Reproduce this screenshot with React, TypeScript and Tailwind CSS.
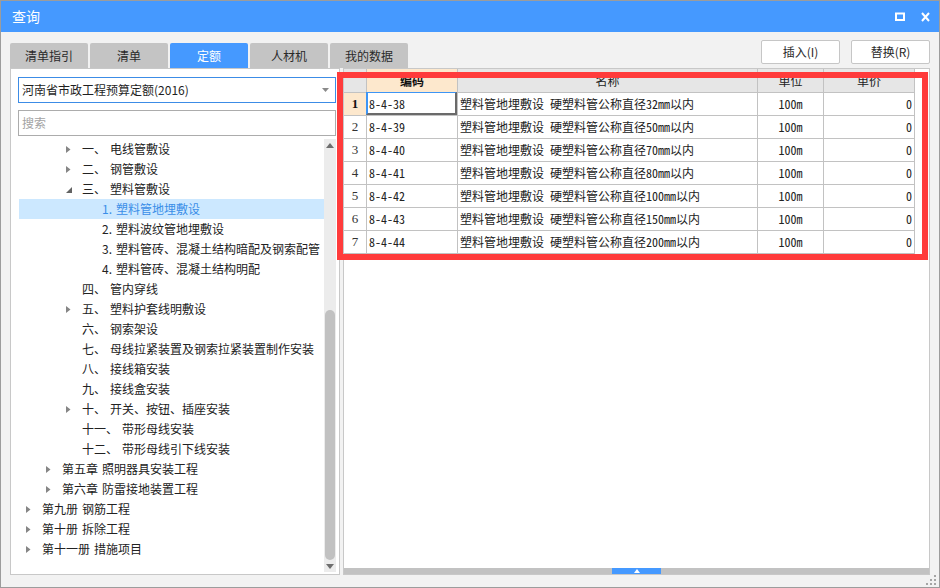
import React from "react";

type Node = {
  level: number;
  arrow?: "right" | "down";
  num: string;
  text: string;
  selected?: boolean;
};

const tree: Node[] = [
  { level: 2, arrow: "right", num: "一、", text: "电线管敷设" },
  { level: 2, arrow: "right", num: "二、", text: "钢管敷设" },
  { level: 2, arrow: "down", num: "三、", text: "塑料管敷设" },
  { level: 3, num: "1.", text: "塑料管地埋敷设", selected: true },
  { level: 3, num: "2.", text: "塑料波纹管地埋敷设" },
  { level: 3, num: "3.", text: "塑料管砖、混凝土结构暗配及钢索配管" },
  { level: 3, num: "4.", text: "塑料管砖、混凝土结构明配" },
  { level: 2, num: "四、", text: "管内穿线" },
  { level: 2, arrow: "right", num: "五、", text: "塑料护套线明敷设" },
  { level: 2, num: "六、", text: "钢索架设" },
  { level: 2, num: "七、", text: "母线拉紧装置及钢索拉紧装置制作安装" },
  { level: 2, num: "八、", text: "接线箱安装" },
  { level: 2, num: "九、", text: "接线盒安装" },
  { level: 2, arrow: "right", num: "十、", text: "开关、按钮、插座安装" },
  { level: 2, num: "十一、", text: "带形母线安装" },
  { level: 2, num: "十二、", text: "带形母线引下线安装" },
  { level: 1, arrow: "right", num: "第五章", text: "照明器具安装工程" },
  { level: 1, arrow: "right", num: "第六章", text: "防雷接地装置工程" },
  { level: 0, arrow: "right", num: "第九册", text: "钢筋工程" },
  { level: 0, arrow: "right", num: "第十册", text: "拆除工程" },
  { level: 0, arrow: "right", num: "第十一册", text: "措施项目" },
];

const rows = [
  { code: "8-4-38", size: "32" },
  { code: "8-4-39", size: "50" },
  { code: "8-4-40", size: "70" },
  { code: "8-4-41", size: "80" },
  { code: "8-4-42", size: "100" },
  { code: "8-4-43", size: "150" },
  { code: "8-4-44", size: "200" },
];

const tabs = ["清单指引", "清单", "定额", "人材机", "我的数据"];

const mono = "font-['Noto_Sans_Mono_CJK_SC','Liberation_Mono','Noto_Sans_CJK_SC',monospace]";
const cols = "grid grid-cols-[23px_91px_300px_66px_91px]";

function TreeArrow({ kind }: { kind?: "right" | "down" }) {
  if (kind === "right")
    return (
      <svg width="5" height="7" viewBox="0 0 5 7" className="ml-[4px]">
        <polygon points="0,0 4.5,3.5 0,7" fill="#858585" />
      </svg>
    );
  if (kind === "down")
    return (
      <svg width="6" height="6" viewBox="0 0 6 6" className="ml-[4px] mt-[2px]">
        <polygon points="6,0 6,6 0,6" fill="#636363" />
      </svg>
    );
  return null;
}

export default function App() {
  return (
    <div className="relative w-[940px] h-[588px] bg-[#f2f2f2] border border-[#9c9c9c] flex flex-col font-['Noto_Sans_CJK_SC','Noto_Sans',sans-serif] text-[#222]">
      {/* title bar */}
      <div className="h-[31px] bg-[#4599ff] flex items-center pl-[11px] pr-[9px] text-white">
        <span className="text-[14px]">查询</span>
        <div className="ml-auto flex items-center gap-[16px]">
          <svg width="10" height="9" viewBox="0 0 10 9">
            <rect x="1" y="1.5" width="8" height="6.5" fill="none" stroke="white" strokeWidth="2" />
          </svg>
          <svg width="9" height="10" viewBox="0 0 9 10">
            <path d="M1 1 L8 9 M8 1 L1 9" stroke="white" strokeWidth="2" />
          </svg>
        </div>
      </div>

      {/* tabs + buttons */}
      <div className="h-[36px] flex px-[9px]">
        <div className="self-end flex gap-[2px]">
          {tabs.map((t) => (
            <div
              key={t}
              className={
                "w-[78px] h-[25px] rounded-t-[2px] flex items-center justify-center text-[12px] " +
                (t === "定额" ? "bg-[#4599ff] text-white" : "bg-[#c4c4c4] text-[#2a2a2a]")
              }
            >
              {t}
            </div>
          ))}
        </div>
        <div className="ml-auto mt-[8px] flex gap-[11px]">
          <button className="w-[79px] h-[24px] bg-white border border-[#c6c6c6] rounded-[2px] text-[12px] text-[#2a2a2a]">
            插入(I)
          </button>
          <button className="w-[79px] h-[24px] bg-white border border-[#c6c6c6] rounded-[2px] text-[12px] text-[#2a2a2a]">
            替换(R)
          </button>
        </div>
      </div>

      {/* panels */}
      <div className="h-[507px] flex gap-[3px] px-[9px]">
        {/* left */}
        <div className="w-[330px] bg-white border border-[#c8c8c8] flex flex-col">
          <div className="mt-[8px] ml-[7px] w-[318px] h-[26px] border border-[#3c8ce6] flex items-center pl-[3px] pr-[6px] text-[12px] text-[#1f1f1f]">
            <span>河南省市政工程预算定额(2016)</span>
            <svg width="7" height="4" viewBox="0 0 7 4" className="ml-auto">
              <polygon points="0,0 7,0 3.5,4" fill="#8a8a8a" />
            </svg>
          </div>
          <div className="mt-[7px] ml-[7px] w-[318px] h-[26px] border border-[#acacac] flex items-center pl-[3px] text-[12px] text-[#a3a3a3]">
            搜索
          </div>
          <div className="mt-[3px] flex-1 flex mb-[2px]">
            <div className="ml-[8px] w-[305px] overflow-hidden">
              {tree.map((n, i) => (
                <div
                  key={i}
                  className={
                    "h-[20px] flex items-center text-[12px] whitespace-nowrap " +
                    (n.selected ? "bg-[#cce8ff] text-[#3a8ee8]" : "")
                  }
                  style={{ paddingLeft: 3 + n.level * 20 }}
                >
                  <div className="w-[20px] h-[20px] flex items-center shrink-0">
                    <TreeArrow kind={n.arrow} />
                  </div>
                  <span className="mr-[4px]">{n.num}</span>
                  <span>{n.text}</span>
                </div>
              ))}
            </div>
            <div className="w-[12px] bg-[#ececec] flex flex-col items-center">
              <div className="h-[12px] flex items-center justify-center">
                <svg width="8" height="5" viewBox="0 0 8 5">
                  <polygon points="4,0 8,5 0,5" fill="#6e6e6e" />
                </svg>
              </div>
              <div className="flex-1" />
              <div className="w-[10px] h-[250px] rounded-full bg-[#c1c1c1]" />
              <div className="h-[12px] flex items-center justify-center">
                <svg width="8" height="5" viewBox="0 0 8 5">
                  <polygon points="0,0 8,0 4,5" fill="#6e6e6e" />
                </svg>
              </div>
            </div>
          </div>
        </div>

        {/* right */}
        <div className="flex-1 bg-white border border-[#c8c8c8] flex flex-col">
          <div className={cols + " w-[571px] h-[24px] bg-[#e6e6e6] text-[12px]"}>
            <div className="border-r border-b border-[#c2c2c2]" />
            <div className="border-r border-b border-[#c2c2c2] bg-[#fde8cd] flex items-center justify-center font-bold text-[#111]">
              编码
            </div>
            <div className="border-r border-b border-[#c2c2c2] flex items-center justify-center">名称</div>
            <div className="border-r border-b border-[#c2c2c2] flex items-center justify-center">单位</div>
            <div className="border-r border-b border-[#c2c2c2] flex items-center justify-center">单价</div>
          </div>
          {rows.map((r, i) => (
            <div key={r.code} className={cols + " w-[571px] h-[23px] text-[12px]"}>
              <div
                className={
                  "border-r border-b border-[#c2c2c2] flex items-center justify-center font-['Liberation_Serif',serif] text-[13px] " +
                  (i === 0 ? "bg-[#fde8cd] font-bold text-[#111]" : "text-[#333]")
                }
              >
                {i + 1}
              </div>
              <div className={"relative border-r border-b border-[#c2c2c2] flex items-center pl-[2px] " + mono}>
                {r.code}
                {i === 0 && (
                  <div className="absolute left-[-1px] top-[-1px] right-0 bottom-0 border-l-2 border-t border-l-[#3d95f5] border-t-[#3d95f5] border-r-2 border-b-2 border-r-[#6a6a6a] border-b-[#6a6a6a]" />
                )}
              </div>
              <div className={"border-r border-b border-[#c2c2c2] flex items-center pl-[2px] whitespace-pre " + mono}>
                {"塑料管地埋敷设 硬塑料管公称直径" + r.size + "mm以内"}
              </div>
              <div className={"border-r border-b border-[#c2c2c2] flex items-center justify-center " + mono}>
                100m
              </div>
              <div className={"border-r border-b border-[#c2c2c2] flex items-center justify-end pr-[2px] " + mono}>
                0
              </div>
            </div>
          ))}
          <div className="flex-1" />
          <div className="h-[6px] bg-[#c2c2c2] flex">
            <div className="w-[268px]" />
            <div className="w-[49px] bg-[#4599ff] flex items-center justify-center">
              <svg width="6" height="4" viewBox="0 0 6 4">
                <polygon points="3,0 6,4 0,4" fill="white" />
              </svg>
            </div>
          </div>
        </div>
      </div>

      {/* annotation highlight */}
      <div className="absolute left-[336px] top-[71px] w-[591px] h-[188px] border-[6px] border-[#ff3b3b]" />

      {/* resize grip */}
      <svg width="10" height="10" viewBox="0 0 10 10" className="absolute right-[3px] bottom-[2px]">
        <rect x="8" y="0" width="2" height="2" fill="#a5a5a5" />
        <rect x="4" y="4" width="2" height="2" fill="#a5a5a5" />
        <rect x="8" y="4" width="2" height="2" fill="#a5a5a5" />
        <rect x="0" y="8" width="2" height="2" fill="#a5a5a5" />
        <rect x="4" y="8" width="2" height="2" fill="#a5a5a5" />
        <rect x="8" y="8" width="2" height="2" fill="#a5a5a5" />
      </svg>
    </div>
  );
}
